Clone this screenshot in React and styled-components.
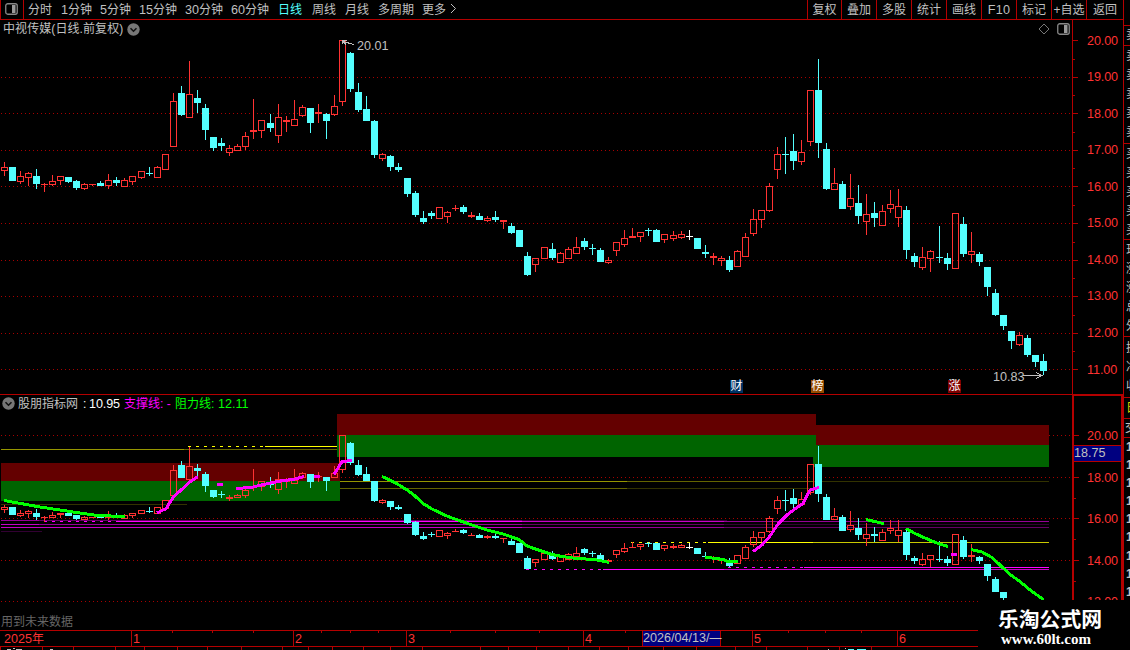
import React from "react";
import styled, { createGlobalStyle } from "styled-components";

const RED = "#b40000";
const UP = "#ff3232";
const DOWN = "#54ffff";
const GRAY = "#c0c0c0";

const GlobalStyle = createGlobalStyle`
  * { box-sizing: border-box; }
  html, body { margin: 0; background: #000; overflow: hidden; }
  body { font-family: "Liberation Sans", "Noto Sans CJK SC", sans-serif; font-size: 12px; color: ${GRAY}; }
  svg { display: block; }
`;

const Screen = styled.div`
  position: relative;
  display: grid;
  grid-template-columns: 1123px 7px;
  width: 1130px;
  height: 650px;
  background: #000;
  overflow: hidden;
`;
const Main = styled.div`
  display: grid;
  grid-template-rows: 20px 375px 236px 16px 3px;
  width: 1123px;
`;

/* ---- toolbar ---- */
const Toolbar = styled.div`
  display: flex;
  height: 20px;
  border-bottom: 1px solid ${RED};
`;
const LayoutButton = styled.div`
  width: 24px;
  padding: 3px 0 0 4px;
  border: solid ${RED};
  border-width: 0 1px;
`;
const Periods = styled.div`
  display: flex;
  flex: 1;
  padding-left: 4px;
`;
const Period = styled.div`
  width: ${(p) => p.$w}px;
  line-height: 20px;
  height: 19px;
  white-space: nowrap;
  color: ${(p) => (p.$on ? DOWN : GRAY)};
`;
const Digits = styled.span`
  font-size: 12.6px;
  letter-spacing: ${(p) => p.$gap || 0}px;
`;
const Chevron = styled.svg`
  margin: 3px 0 0 4px;
`;
const Action = styled.div`
  display: flex;
  justify-content: center;
  width: ${(p) => p.$w}px;
  height: 19px;
  border-left: 1px solid ${RED};
  line-height: 20px;
  white-space: nowrap;
`;

/* ---- chart panels ---- */
const Panel = styled.div`
  display: grid;
  grid-template-columns: 1072px 51px;
  border-bottom: 1px solid ${RED};
  overflow: hidden;
`;
const Plot = styled.div`
  position: relative;
  overflow: hidden;
`;
const Drawing = styled.svg`
  position: absolute;
  left: 0;
  top: 0;
`;
const PlotHeader = styled.div`
  position: relative;
  display: flex;
  align-items: center;
  height: 18px;
  padding: 0 3px;
  white-space: nowrap;
`;
const Title = styled.span`
  width: 121px;
  height: 18px;
  line-height: 18px;
  letter-spacing: 0.08px;
`;
const Spacer = styled.div`
  flex: 1;
`;
const Toggle = styled.svg`
  margin: ${(p) => p.$m || "0"};
`;
const Legend = styled.span`
  color: ${(p) => p.$c};
  width: ${(p) => p.$w}px;
  height: 18px;
  line-height: 18px;
`;
const Callout = styled.div`
  position: absolute;
  left: ${(p) => p.$x}px;
  top: ${(p) => p.$y}px;
  font-size: 12.6px;
  line-height: 14px;
`;
const Chip = styled.div`
  position: absolute;
  left: ${(p) => p.$x}px;
  top: 360px;
  width: 13px;
  height: 13px;
  background: ${(p) => p.$bg};
  color: #fff;
  font-size: 12px;
  line-height: 13px;
  text-align: center;
`;
const Notice = styled.div`
  position: absolute;
  left: 1px;
  bottom: -1px;
  line-height: 18px;
  color: #666;
`;

/* ---- price axes ---- */
const Axis = styled.div`
  display: grid;
  grid-template-columns: 6px 1fr;
  border: solid ${RED};
  border-width: ${(p) => (p.$boxed ? "1px 2px 0 2px" : "0 0 0 1px")};
  position: relative;
  overflow: hidden;
`;
const Prices = styled.div`
  padding-top: ${(p) => p.$top}px;
`;
const Price = styled.div`
  height: ${(p) => p.$h}px;
  line-height: ${(p) => p.$h}px;
  padding-left: ${(p) => p.$pad}px;
  color: ${UP};
  font-size: 12.6px;
  letter-spacing: -0.1px;
`;
const CurrentPrice = styled.div`
  position: absolute;
  left: 0;
  right: 0;
  top: 49px;
  height: 17px;
  border: solid ${RED};
  border-width: 1px 0;
  background: #000080;
  font-size: 12.6px;
  line-height: 14px;
`;

/* ---- time axis ---- */
const Timeline = styled.div`
  position: relative;
  display: flex;
  height: 16px;
  border-bottom: 1px solid ${RED};
`;
const Month = styled.div`
  width: ${(p) => p.$w}px;
  padding-left: ${(p) => (p.$first ? 4 : 1)}px;
  border-left: ${(p) => (p.$first ? 0 : 1)}px solid ${RED};
  color: ${UP};
  line-height: 16px;
`;
const CursorDate = styled.div`
  position: absolute;
  left: 642px;
  top: 0;
  width: 79px;
  height: 15px;
  border: solid ${RED};
  border-width: 0 1px;
  background: #000080;
  line-height: 14px;
  white-space: nowrap;
`;

/* ---- quote strip ---- */
const Strip = styled.div`
  border-left: 1px solid ${RED};
  overflow: hidden;
`;
const StripBlock = styled.div`
  height: ${(p) => p.$h}px;
  border-bottom: 1px solid ${RED};
  padding: ${(p) => p.$pt || 0}px 0 0 ${(p) => p.$pl ?? 2}px;
  color: ${(p) => p.$c || GRAY};
  overflow: hidden;
`;
const StripRow = styled.div`
  width: 14px;
  height: ${(p) => p.$h}px;
  line-height: ${(p) => p.$h}px;
  font-weight: ${(p) => (p.$bold ? 700 : 400)};
`;

const Brand = styled.div`
  position: absolute;
  left: 978px;
  top: 600px;
  width: 152px;
  height: 50px;
  padding: 6px 0 0 20px;
  background: #000;
  color: #fff;
`;
const BrandName = styled.div`
  font: 700 20.8px/25px "Noto Sans CJK SC", sans-serif;
  white-space: nowrap;
`;
const BrandUrl = styled.div`
  padding-left: 3px;
  font: 700 15px/16px "Liberation Serif", serif;
`;

/* [left, direction, body top, body bottom, high, low] */
const CANDLES = [
  [1,"u",167,171,162,176],[9,"d",167,181],[17,"u",176,182,171,184],[25,"u",173,178,172,186],
  [33,"d",176,184,169,189],[41,"u",184,185,183,192],[49,"u",181,185,175,186],[57,"u",176,181,176,185],
  [65,"d",177,182,177,183],[73,"d",181,188,180,190],[81,"u",184,189,183,190],[89,"u",184,185,184,186],
  [97,"d",183,186,181,186],[105,"u",180,186,174,189],[113,"d",180,183,177,186],[121,"u",180,187,178,187],
  [129,"u",176,182,176,185],[138,"u",171,178,171,179],[146,"d",173,174,167,176],[154,"u",167,178,166,178],
  [162,"u",154,170],[170,"u",101,147,93,147],[178,"d",93,115,86,116],[186,"u",94,118,61,118],
  [194,"d",98,103,90,113],[202,"d",108,130,104,140],[210,"d",137,148,137,151],[218,"d",143,146,138,151],
  [226,"u",148,153,145,156],[234,"u",146,151,144,151],[242,"u",136,147,132,150],[250,"u",130,132,99,139],
  [258,"u",120,131,120,138],[267,"d",123,128,114,132],[275,"u",117,136,104,143],[283,"u",120,122,116,132],
  [291,"u",119,126,100,126],[299,"u",107,116,105,117],[307,"d",108,123,108,133],[315,"u",112,114,104,123],
  [323,"d",114,121,113,139],[331,"u",106,115,95,116],[339,"u",40,102,40,106],[347,"d",53,89,52,92],
  [355,"d",92,110,83,112],[363,"d",109,121,96,121],[371,"d",121,155,120,158],[379,"u",154,159,153,161],
  [387,"d",156,167,155,171],[395,"d",167,170,163,172],[404,"d",178,194,178,197],[412,"d",193,215,191,217],
  [420,"d",218,222,211,224],[428,"d",213,216,211,219],[436,"u",207,219],[444,"u",212,217,211,223],
  [452,"u",208,209,205,211],[460,"d",207,212,205,214],[468,"u",215,217,212,218],[476,"d",216,220,213,220],
  [484,"u",218,221,216,222],[492,"d",217,220,211,222],[500,"u",220,222,220,229],[508,"d",226,233,223,234],
  [516,"d",230,247],[524,"d",256,275,252,276],[532,"u",258,265,258,272],[541,"u",247,259],
  [549,"d",249,258,243,260],[557,"u",253,263,252,263],[565,"u",249,259,247,259],[573,"u",247,254,237,254],
  [581,"d",241,247,238,250],[589,"d",248,249,244,255],[597,"d",250,262,248,262],[605,"u",260,263,257,264],
  [613,"u",242,251,242,256],[621,"u",238,245,230,247],[629,"u",236,238,228,238],[637,"u",232,237,232,242],
  [645,"d",230,231,228,236],[653,"d",230,242,229,242],[661,"u",234,240,234,243],[670,"u",235,239,231,241],
  [678,"u",234,238,231,239],[686,"e",236,237,230,240],[694,"d",238,249],[702,"d",252,254,245,258],
  [710,"u",256,258,253,265],[718,"u",258,261,256,266],[726,"d",260,270,256,272],[734,"u",251,267,250,267],
  [742,"u",237,257,233,257],[750,"u",219,234,209,236],[758,"u",210,220,210,228],[766,"u",186,211,183,212],
  [774,"u",154,170,147,179],[782,"d",154,155,137,174],[790,"d",151,161,134,170],[798,"u",152,162,140,165],
  [807,"u",90,142,90,146],[815,"d",90,143,59,158],[823,"d",149,189,143,190],[831,"u",183,190,168,190],
  [839,"d",184,209,181,209],[847,"u",198,207,174,210],[855,"d",203,216,185,224],[863,"u",214,222,194,235],
  [871,"d",213,218,202,227],[879,"u",211,226,205,226],[887,"u",204,209,190,213],[895,"u",206,218,189,227],
  [903,"d",210,250,206,259],[911,"d",256,262,253,267],[919,"u",257,268,247,270],[927,"u",251,259,250,272],
  [936,"d",257,258,226,263],[944,"d",258,264,253,270],[952,"u",213,269],[960,"d",224,254,217,257],
  [968,"u",251,255,232,263],[976,"d",254,262,252,266],[984,"d",267,287,267,296],[992,"d",293,315,289,316],
  [1000,"d",315,326,315,330],[1008,"d",331,341,331,349],[1016,"u",335,345,332,346],[1024,"d",338,355,335,357],
  [1032,"d",355,362,355,367],[1040,"d",361,371,354,375],
];

const same = (y) => y;
const compressed = (y) => Math.round(435.2 + (y - 40) * 0.5685);

function Candles({ scale }) {
  return CANDLES.map(([x, dir, a, b, h = a, l = b]) => {
    const top = scale(a);
    const bottom = Math.max(top + 1, b - a === 1 ? top + 1 : scale(b));
    const high = Math.min(scale(h), top);
    const low = Math.max(scale(l), bottom);
    const color = dir === "u" ? UP : dir === "d" ? DOWN : "#fff";
    const hollow = dir === "u" && bottom - top > 2;
    return (
      <g key={x} fill={color}>
        <rect x={x + 3} y={high} width="1" height={top - high} />
        <rect x={x + 3} y={bottom} width="1" height={low - bottom} />
        {hollow ? (
          <rect x={x + 0.5} y={top + 0.5} width="6" height={bottom - top - 1} fill="none" stroke={color} />
        ) : (
          <rect x={x} y={top} width="7" height={bottom - top} />
        )}
      </g>
    );
  });
}

function Grid({ ys }) {
  return ys.map((y) => (
    <line key={y} x1="1" x2="1072" y1={y + 0.5} y2={y + 0.5} stroke="#a80000" strokeDasharray="1 3" />
  ));
}

/* [x1, x2, y, colour, dashed] */
const LEVELS = [
  [1,184,449,"#969600"],[184,337,449,"#646400"],[188,265,446,"#ffff00",1],[265,337,446,"#ffff00"],
  [1,187,504,"#323200"],[340,627,481,"#969600"],[627,813,481,"#646400"],[813,1049,481,"#323200"],
  [340,627,488,"#646400"],[627,813,488,"#323200"],
  [1,39,520,"#960096"],[39,522,520,"#640064"],[522,727,520,"#320032"],
  [44,119,521,"#ff00ff",1],[119,522,521,"#ff00ff"],[522,724,521,"#c800c8"],[724,1049,521,"#960096"],
  [1,39,524,"#c800c8"],[39,522,524,"#960096"],[522,724,524,"#640064"],[724,1049,524,"#320032"],
  [1,522,527,"#c800c8"],[522,724,527,"#960096"],[724,1049,527,"#640064"],[1,42,531,"#320032"],
  [526,603,569,"#ff00ff",1],[603,724,569,"#ff00ff"],[724,1049,569,"#c800c8"],
  [728,804,567,"#ff00ff",1],[804,1049,567,"#ff00ff"],
  [631,708,542,"#ffff00",1],[708,813,542,"#ffff00"],[813,1049,542,"#c8c800"],
];

const RESISTANCE = [
  "4,500.5 40,507 70,511.5 97,515.5 125,516.5",
  "382,476.5 391,480.5 399,485 408,490.5 415,496 423,503.5 432,509 448,516.5 462,521.5 472,525 487,530 503,534 519,539.5 527,546 537,549.5 552,554.5 562,556.5 577,558.5 595,559.5 609,562.5",
  "705,557 723,559.5 728,561.5 738,561.8",
  "866,519.5 884,523.7",
  "906,528.5 915,533.5 925,538 938,543.5 948,546.5",
  "971,549.5 982,552 992,557.5 1000,565 1010,574.5 1020,581.5 1030,590 1044,600",
];
const SUPPORT = [
  "157,512.9 166,508.7 173,497.5 190,481.7 198,476.7",
  "217,484.5 223,484.5",
  "236,488.5 251,487.5 267,483.7 283,480.5 293,479.5 304,476.5",
  "314,476.5 320,476.5",
  "334,474.5 342,461.5 352,460.5",
  "753,551.5 762,545 770,536 778,524 787,515 795,509 803,503.5 810,490 819,487.5",
  "951,554.5 957,554.5",
];

function Trend({ paths, color }) {
  return paths.map((p) => (
    <polyline key={p} points={p} fill="none" stroke={color} strokeWidth="3" strokeLinejoin="round" />
  ));
}

function PanelIcon() {
  return (
    <svg width="13" height="12" viewBox="0 0 13 12">
      <rect x="0.75" y="0.75" width="11.5" height="10.5" rx="2" fill="none" stroke="#888" strokeWidth="1.3" />
      <rect x="7" y="2" width="3.5" height="8" fill="#999" />
    </svg>
  );
}

function ToggleIcon({ m }) {
  return (
    <Toggle $m={m} width="13" height="13" viewBox="0 0 13 13">
      <circle cx="6.5" cy="6.5" r="6.2" fill="#777" />
      <path d="M3.5 5.2 6.5 8.2 9.5 5.2" fill="none" stroke="#111" strokeWidth="1.6" />
    </Toggle>
  );
}

function Ticks({ major, minor, height, offset }) {
  return (
    <svg width="6" height={height} viewBox={`0 ${offset} 6 ${height}`} fill={RED}>
      {major.map((y) => <rect key={y} x="0" y={y} width="5" height="1" />)}
      {minor.map((y) => <rect key={y} x="0" y={y} width="2" height="1" />)}
    </svg>
  );
}

const PERIODS = [
  ["", "分时", 33], ["1", "分钟", 39], ["5", "分钟", 39], ["15", "分钟", 46], ["30", "分钟", 46],
  ["60", "分钟", 47], ["", "日线", 34], ["", "周线", 33], ["", "月线", 33], ["", "多周期", 44], ["", "更多", 24],
];
const ACTIONS = [
  ["复权", 34], ["叠加", 35], ["多股", 35], ["统计", 35], ["画线", 35], ["F10", 35], ["标记", 35], ["+自选", 35], ["返回", 37],
];
const MONTHS = [["1", 162], ["2", 113], ["3", 177], ["4", 169], ["5", 145], ["6", 81]];
const UPPER_TICKS = [172,212,253,321,350,378,450,495,539,625,788,825,861];
const LOWER_TICKS = [0,42,73,115,144,177,207,241,282,308,332,363,390,422,480,508,536,568,599,628,663,696,735,766,807,839,871];

export default function App() {
  return (
    <>
      <GlobalStyle />
      <Screen>
        <Main>
          <Toolbar>
            <LayoutButton><PanelIcon /></LayoutButton>
            <Periods>
              {PERIODS.map(([n, t, w]) => (
                <Period key={n + t} $w={w} $on={t === "日线"}>
                  {n && <Digits>{n}</Digits>}{t}
                </Period>
              ))}
              <Chevron width="7" height="11" viewBox="0 0 7 11">
                <path d="M1 1 5.5 5.5 1 10" fill="none" stroke={GRAY} />
              </Chevron>
            </Periods>
            {ACTIONS.map(([t, w]) => (
              <Action key={t} $w={w}>{t === "F10" ? <Digits $gap={0.3}>{t}</Digits> : t}</Action>
            ))}
          </Toolbar>

          <Panel>
            <Plot>
              <Drawing width="1072" height="375" viewBox="0 20 1072 375" shapeRendering="crispEdges">
                <Grid ys={[77, 113, 150, 186, 223, 260, 296, 333, 369]} />
                <Candles scale={same} />
                <g stroke={GRAY} fill="none">
                  <path d="M343 41.5 354 44.5M342.5 40V44M342 40.5H347M343 41 346 45" />
                  <path d="M1023 375.5H1042M1036 372.5 1042 375.5 1036 378.5" />
                </g>
              </Drawing>
              <PlotHeader>
                <Title>中视传媒(日线.前复权)</Title>
                <ToggleIcon m="0 0 0 3px" />
                <Spacer />
                <svg width="12" height="12" viewBox="0 0 12 12">
                  <path d="M6 1 11 6 6 11 1 6Z" fill="none" stroke="#777" />
                </svg>
                <Toggle as="span" $m="0 -1px 0 7px"><PanelIcon /></Toggle>
              </PlotHeader>
              <Callout $x={357} $y={19}>20.01</Callout>
              <Callout $x={993} $y={350}>10.83</Callout>
              <Chip $x={730} $bg="#003264">财</Chip>
              <Chip $x={811} $bg="#964b00">榜</Chip>
              <Chip $x={948} $bg="#800000">涨</Chip>
            </Plot>
            <Axis>
              <Ticks height={374} offset={20} major={[40, 77, 113, 150, 186, 223, 260, 296, 333, 369]} minor={[59, 95, 132, 168, 205, 242, 278, 315, 351]} />
              <Prices $top={2.6}>
                {[20, 19, 18, 17, 16, 15, 14, 13, 12, 11].map((v) => (
                  <Price key={v} $h={36.55} $pad={8}>{v}.00</Price>
                ))}
              </Prices>
            </Axis>
          </Panel>

          <Panel>
            <Plot>
              <Drawing width="1072" height="235" viewBox="0 395 1072 235" shapeRendering="crispEdges">
                <Grid ys={[435, 477, 518, 560, 601]} />
                <rect x="1" y="463" width="339" height="18" fill="#640000" />
                <rect x="1" y="481" width="339" height="20" fill="#006400" />
                <rect x="813" y="425" width="236" height="20" fill="#640000" />
                <rect x="813" y="445" width="236" height="22" fill="#006400" />
                <rect x="337" y="414" width="479" height="21" fill="#640000" />
                <rect x="337" y="435" width="479" height="22" fill="#006400" />
                {LEVELS.map(([x1, x2, y, c, dashed]) => (
                  <line key={`${x1}-${y}`} x1={x1} x2={x2} y1={y + 0.5} y2={y + 0.5} stroke={c} strokeDasharray={dashed ? "3 5" : undefined} />
                ))}
                <Candles scale={compressed} />
                <Trend paths={RESISTANCE} color="#00ff00" />
                <Trend paths={SUPPORT} color="#ff00ff" />
              </Drawing>
              <PlotHeader>
                <ToggleIcon m="-2px 3px 0 -1px" />
                <Legend $c={GRAY} $w={65}>股朋指标网</Legend>
                <Legend $c="#fff" $w={6}>:</Legend>
                <Legend $c="#fff" $w={35}><Digits $gap={-0.1}>10.95</Digits></Legend>
                <Legend $c="#ff00ff" $w={51}>支撑线: -</Legend>
                <Legend $c="#00ff00" $w={43}>阻力线:</Legend>
                <Legend $c="#00ff00" $w={40}><Digits>12.11</Digits></Legend>
              </PlotHeader>
              <Notice>用到未来数据</Notice>
            </Plot>
            <Axis $boxed>
              <Ticks height={234} offset={396} major={[435, 477, 518, 560]} minor={[498, 539, 581]} />
              <Prices $top={20.2}>
                {[20, 18, 16, 14, 12].map((v) => (
                  <Price key={v} $h={41.5} $pad={7}>{v}.00</Price>
                ))}
              </Prices>
              <CurrentPrice>18.75</CurrentPrice>
            </Axis>
          </Panel>

          <Timeline>
            <Month $w={131} $first><Digits>2025</Digits>年</Month>
            {MONTHS.map(([m, w]) => <Month key={m} $w={w}><Digits>{m}</Digits></Month>)}
            <Drawing width="978" height="3" fill={RED}>
              {UPPER_TICKS.map((x) => <rect key={x} x={x} y="0" width="1" height="2" />)}
            </Drawing>
            <CursorDate><Digits>2026/04/13/</Digits>—</CursorDate>
          </Timeline>
          <svg width="978" height="3" viewBox="0 0 978 3" shapeRendering="crispEdges">
            {LOWER_TICKS.map((x) => <rect key={x} x={x} width="1" height="3" fill={RED} />)}
            <path d="M7 2.5H11M13 1.5H15M16 2.5H22M50 2.5H53M828 2.5H829M845 1.5H846" stroke={GRAY} />
            <path d="M848 2.5H854M857 2.5H866" stroke={DOWN} />
          </svg>
        </Main>

        <Strip>
          <StripBlock $h={26} />
          <StripBlock $h={20}><StripRow $h={19}>卖</StripRow></StripBlock>
          <StripBlock $h={98} $pt={1}>{[5, 4, 3, 2, 1].map((n) => <StripRow key={n} $h={19}>卖</StripRow>)}</StripBlock>
          <StripBlock $h={96} $pt={1}>{[1, 2, 3, 4, 5].map((n) => <StripRow key={n} $h={19}>买</StripRow>)}</StripBlock>
          <StripBlock $h={97} $pt={1}>{["现", "涨", "涨", "总", "外"].map((t, i) => <StripRow key={i} $h={19}>{t}</StripRow>)}</StripBlock>
          <StripBlock $h={61} $pt={2}>{["换", "净", "收"].map((t) => <StripRow key={t} $h={19}>{t}</StripRow>)}</StripBlock>
          <StripBlock $h={21} $pl={2} $c="#d8d800"><StripRow $h={20}>日</StripRow></StripBlock>
          <StripBlock $h={19} $pl={1}><StripRow $h={18}>交</StripRow></StripBlock>
          <StripBlock $h={212}>{[1, 2, 3, 4, 5, 6, 7, 8, 9].map((n) => <StripRow key={n} $h={18.1} $bold>1</StripRow>)}</StripBlock>
        </Strip>

        <Brand>
          <BrandName>乐淘公式网</BrandName>
          <BrandUrl>www.60lt.com</BrandUrl>
        </Brand>
      </Screen>
    </>
  );
}
